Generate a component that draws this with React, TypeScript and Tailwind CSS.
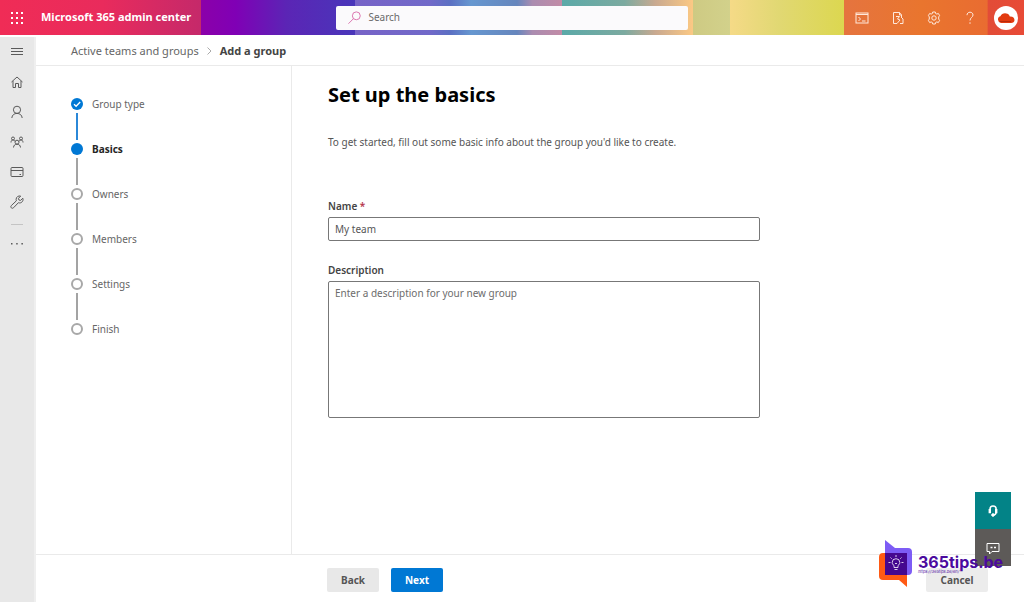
import React from "react";

type StepState = "done" | "current" | "todo";

const steps: { label: string; state: StepState }[] = [
	{ label: "Group type", state: "done" },
	{ label: "Basics", state: "current" },
	{ label: "Owners", state: "todo" },
	{ label: "Members", state: "todo" },
	{ label: "Settings", state: "todo" },
	{ label: "Finish", state: "todo" },
];

interface IconProps {
	className?: string;
	children: React.ReactNode;
}

const Icon = ({ className = "size-4", children }: IconProps) => (
	<svg
		viewBox="0 0 16 16"
		className={className}
		fill="none"
		stroke="currentColor"
		strokeWidth="1"
		aria-hidden="true"
	>
		{children}
	</svg>
);

const navItems = [
	{
		label: "Home",
		icon: (
			<path d="M2.5 8 8 3l5.500 5M4 7v6.500h2.500V9.500h3v4H12V7" />
		),
	},
	{
		label: "Users",
		icon: (
			<>
				<circle cx="8" cy="5.800" r="3.600" />
				<path d="M2.800 14c.3-3 2.400-4.600 5.200-4.600s4.900 1.600 5.200 4.600" />
			</>
		),
	},
	{
		label: "Teams and groups",
		icon: (
			<>
				<circle cx="4" cy="4.500" r="1.500" />
				<circle cx="12" cy="4.500" r="1.500" />
				<circle cx="8" cy="8.200" r="2" />
				<path d="M2 8.500c0-1.700.8-2.500 2-2.500s1.800.8 2.200 1.500M14 8.500c0-1.700-.8-2.500-2-2.500s-1.800.8-2.200 1.500M4.500 13.500c.2-2.300 1.500-3.300 3.500-3.300s3.300 1 3.500 3.300" />
			</>
		),
	},
	{
		label: "Billing",
		icon: (
			<>
				<rect x="2" y="3.500" width="12" height="9" rx="1" />
				<path d="M2 6.500h12M10.500 10.500H12" />
			</>
		),
	},
	{
		label: "Setup",
		icon: (
			<path d="m13.800 4.200-2.200 2.200-1.700-.4-.4-1.700 2.200-2.200c-2.200-.7-4.600.8-4.600 3.300 0 .5.100 1 .3 1.400l-5 4.700c-.8.800-.7 1.700-.1 2.300s1.500.7 2.300-.1l4.800-5c2.700 1.100 5.500-1.600 4.400-4.500Z" />
		),
	},
];

const headerActions = [
	{
		label: "Cloud shell",
		icon: (
			<>
				<rect x="2" y="3" width="12" height="10" />
				<path d="M2 4.500h12M4.500 7l2 2-2 2M8 11h3.500" />
			</>
		),
	},
	{
		label: "What's new",
		icon: (
			<>
				<path d="M7 13.500H3.500v-11h6L11.500 5v3M9.500 2.500V5h2" />
				<path d="M6 6.500h3.500L7.500 9l2.500 1-3 3.500M10 13.500h3V9l-1.500-1.500" />
			</>
		),
	},
	{
		label: "Settings",
		icon: (
			<>
				<path d="m6.700 2-.3 1.500-1.300.6-1.400-.7L2.400 5.600l.9 1.300v2.200l-.9 1.300 1.300 2.200 1.400-.7 1.300.6.3 1.500h2.600l.3-1.500 1.300-.6 1.400.7 1.300-2.200-.9-1.300V6.900l.9-1.300-1.300-2.200-1.400.7-1.300-.6L9.300 2Z" />
				<circle cx="8" cy="8" r="2.200" />
			</>
		),
	},
	{
		label: "Help",
		icon: (
			<>
				<path d="M5 5.200C5 3.300 6.300 2.200 8 2.200s3 1.100 3 2.800c0 2.200-3 2.700-3 5.500" />
				<path d="M8 12.300v1.500" />
			</>
		),
	},
];

const Header = () => (
	<header className="flex h-[35px] items-center bg-[linear-gradient(90deg,#f02c56_0%,#e92b5c_10%,#c5296a_19.6%,#8b00a9_19.6%,#8000b5_23%,#5b25b5_28%,#4936ba_34.7%,#7763c7_34.7%,#7169c9_42%,#5b70c3_44%,#6697d0_46%,#6686bd_50.500%,#ab8cb0_52%,#c28ba6_54.900%,#5ba9a8_54.900%,#7caaa0_61%,#c9a990_64%,#fcc984_67.700%,#ceca83_67.700%,#d2d18b_71.300%,#f5da87_71.300%,#e1d873_76%,#dcd750_82.400%,#e5743f_82.400%,#e9752e_90%,#e96c31_96.400%,#e24c37_96.500%,#e84a36_100%)] text-white">
		<div className="flex flex-1 items-center">
			<button
				type="button"
				aria-label="App launcher"
				className="flex w-[34px] justify-center"
			>
				<svg viewBox="0 0 12 12" className="size-3" fill="currentColor">
					{[0, 5, 10].map((y) =>
						[0, 5, 10].map((x) => (
							<rect
								key={`${x}-${y}`}
								x={x}
								y={y}
								width="2"
								height="2"
							/>
						))
					)}
				</svg>
			</button>
			<a href="#" className="ml-[7px] whitespace-nowrap text-[11px] font-bold">
				Microsoft 365 admin center
			</a>
		</div>
		<label className="flex h-6 w-[34.300%] items-center rounded-xs bg-[#fbfafc] px-3">
			<Icon className="size-[14px] text-[#d765a6]">
				<circle cx="9.500" cy="5.500" r="4.500" />
				<path d="M6.200 8.800.5 14.500" />
			</Icon>
			<input
				type="search"
				aria-label="Search"
				placeholder="Search"
				className="ml-[6px] min-w-0 flex-1 text-[10px] text-[#555] outline-none placeholder:text-[#6a6a6a]"
			/>
		</label>
		<div className="flex flex-1 items-center justify-end">
			{headerActions.map((action) => (
				<button
					key={action.label}
					type="button"
					aria-label={action.label}
					className="flex w-9 justify-center text-[#ffe9dc]"
				>
					<Icon>{action.icon}</Icon>
				</button>
			))}
			<button
				type="button"
				aria-label="Account"
				className="flex w-9 justify-center"
			>
				<span className="flex size-6 items-center justify-center rounded-full bg-white">
					<svg viewBox="0 0 18 12" className="h-3 w-[18px]">
						<path
							d="M4 11a3.500 3.500 0 0 1-.6-6.800C4.500 1.800 7.500.2 10.500 1.800c1.300.6 2 1.600 2.300 2.700C16 4.300 17.500 6 17.500 8S16 11 14 11Z"
							fill="#e23a10"
						/>
						<path
							d="M3 9.500h11"
							stroke="#b82a0c"
							strokeWidth="1"
						/>
					</svg>
				</span>
			</button>
		</div>
	</header>
);

const Sidebar = () => (
	<nav
		aria-label="Main"
		className="mt-[2px] flex w-9 shrink-0 flex-col items-center border-r-2 border-[#efefef] bg-[#e8e8e8] text-[#5a5a5a]"
	>
		<button type="button" aria-label="Toggle menu" className="flex h-[30px] items-center">
			<Icon>
				<path d="M2 4.500h12M2 7.500h12M2 10.500h12" />
			</Icon>
		</button>
		{navItems.map((item) => (
			<a
				key={item.label}
				href="#"
				aria-label={item.label}
				className="flex h-[30px] items-center"
			>
				<Icon>{item.icon}</Icon>
			</a>
		))}
		<hr className="mt-[7px] w-3 border-[#c4c4c4]" />
		<button type="button" aria-label="Show all" className="mt-[11px]">
			<svg viewBox="0 0 16 16" className="size-4" fill="currentColor">
				<rect x="2" y="7" width="1.500" height="1.500" />
				<rect x="7.200" y="7" width="1.500" height="1.500" />
				<rect x="12.400" y="7" width="1.500" height="1.500" />
			</svg>
		</button>
	</nav>
);

const StepMarker = ({ state }: { state: StepState }) => {
	if (state === "todo") {
		return (
			<span className="size-3 rounded-full border-2 border-[#a8a8a8]" />
		);
	}
	return (
		<span className="flex size-3 items-center justify-center rounded-full bg-[#0078d4] text-white">
			{state === "done" && (
				<svg
					viewBox="0 0 12 12"
					className="size-3"
					fill="none"
					stroke="currentColor"
					strokeWidth="1.3"
				>
					<path d="m3 6.200 2.100 2.100L9.200 4" />
				</svg>
			)}
		</span>
	);
};

const Steps = () => (
	<ol className="w-[256px] shrink-0 border-r border-[#eaeaea] pt-8 pl-[35px]">
		{steps.map((step, i) => (
			<li key={step.label} className="flex gap-[9px]">
				<div className="flex flex-col items-center">
					<StepMarker state={step.state} />
					{i < steps.length - 1 && (
						<span
							className={`my-[3px] h-[27px] w-[2px] ${
								step.state === "done"
									? "bg-[#2b88d8]"
									: "bg-[#a3a3a3]"
							}`}
						/>
					)}
				</div>
				<span
					className={`text-[10px] leading-3 ${
						step.state === "current"
							? "font-bold text-[#252525]"
							: "text-[#666]"
					}`}
				>
					{step.label}
				</span>
			</li>
		))}
	</ol>
);

const BasicsForm = () => (
	<form className="flex min-w-0 flex-1 flex-col px-9 pt-[15px] text-[10px] text-[#555]">
		<h1 className="text-[20px] leading-7 font-bold text-black">
			Set up the basics
		</h1>
		<p className="mt-[25px] leading-4">
			To get started, fill out some basic info about the group you'd like to
			create.
		</p>
		<div className="mt-12 flex max-w-[432px] flex-col gap-[3px]">
			<label htmlFor="name" className="leading-4 font-semibold text-[#444]">
				Name <span className="text-[#b5344a]">*</span>
			</label>
			<input
				id="name"
				type="text"
				required
				defaultValue="My team"
				className="h-6 rounded-xs border border-[#777] px-[6px]"
			/>
		</div>
		<div className="mt-[21px] flex max-w-[432px] flex-col gap-[3px]">
			<label
				htmlFor="description"
				className="leading-4 font-semibold text-[#444]"
			>
				Description
			</label>
			<textarea
				id="description"
				placeholder="Enter a description for your new group"
				className="h-[137px] resize-none rounded-xs border border-[#777] px-[6px] py-[3px] leading-4 placeholder:text-[#6c6c6c]"
			/>
		</div>
	</form>
);

const Footer = () => (
	<footer className="flex gap-3 border-t border-[#eaeaea] pt-[13px] pr-9 pb-[10px] pl-[291px] text-[10px] font-bold">
		<button
			type="button"
			className="h-6 w-[52px] rounded-xs bg-[#e8e8e8] text-[#555]"
		>
			Back
		</button>
		<button
			type="button"
			className="h-6 w-[52px] rounded-xs bg-[#0078d4] text-white"
		>
			Next
		</button>
		<button
			type="button"
			className="ml-auto h-6 w-[62px] rounded-xs bg-[#ececec] text-[#555]"
		>
			Cancel
		</button>
	</footer>
);

const SupportButtons = () => (
	<div className="absolute right-[13px] bottom-9 flex w-9 flex-col">
		<button
			type="button"
			aria-label="Help and support"
			className="flex h-[37px] items-center justify-center bg-[#038387] text-white"
		>
			<svg viewBox="0 0 16 16" className="size-4" fill="none" stroke="currentColor">
				<path
					d="M5 8.500V6.200C5 4 6.300 3 8 3s3.200 1.200 3.200 3.200v2.300c0 2.200-1.200 3.500-3 3.500"
					strokeWidth="1.500"
				/>
				<path d="M4.800 6v4.200M11.200 6v4.200" strokeWidth="2.400" />
				<circle cx="8" cy="12" r="1.300" fill="currentColor" />
			</svg>
		</button>
		<button
			type="button"
			aria-label="Give feedback"
			className="flex h-[37px] items-center justify-center bg-[#5d5a58] text-white"
		>
			<Icon>
				<path d="M2 3.500h12v8H7L4.500 14v-2.500H2Z" />
				<path d="M5.500 7.500h2M9 7.500h2" strokeWidth="1.500" />
			</Icon>
		</button>
	</div>
);

const SiteBadge = () => (
	<a
		href="#"
		className="absolute right-[19px] bottom-[14px] flex items-center gap-[5px] text-[#4b0a9e]"
	>
		<svg viewBox="0 0 34 48" className="h-12 w-[34px]">
			<path
				d="M4 13h24v34l-8-7H4a4 4 0 0 1-4-4V17a4 4 0 0 1 4-4Z"
				fill="#ff5a14"
			/>
			<path
				d="M6 0l10 8h13a4 4 0 0 1 4 4v19a4 4 0 0 1-4 4H6Z"
				fill="#7d5cf5"
			/>
			<path d="M6 13h22v22H6Z" fill="#45088f" />
			<g fill="none" stroke="#fff" strokeWidth=".8">
				<path d="M15 27.500v-2c-1.200-.8-1.800-1.900-1.800-3a3.800 3.800 0 0 1 7.600 0c0 1.100-.6 2.200-1.800 3v2ZM15.500 29.500h3M16 23l1 1 1-1" />
				<path d="M17 15v2M11.500 17.500l1.200 1.200M22.500 17.500l-1.200 1.200M9.500 22.500h2M22.500 22.500h2" />
			</g>
		</svg>
		<span className="flex w-[87px] flex-col font-['Inter',sans-serif]">
			<span className="text-[16px] leading-4 font-bold">365tips.be</span>
			<span className="text-[4px] leading-[4px] italic">
				https://365tips.be/en/
			</span>
		</span>
	</a>
);

const App = () => {
	return (
		<div className="relative flex min-h-screen flex-col bg-white font-['Noto_Sans','Open_Sans',sans-serif]">
			<Header />
			<div className="flex flex-1">
				<Sidebar />
				<main className="flex min-w-0 flex-1 flex-col">
					<nav
						aria-label="Breadcrumb"
						className="flex h-[31px] items-center gap-2 border-b border-[#eaeaea] pt-[2px] pl-[35px] text-[11px] text-[#666]"
					>
						<a href="#">Active teams and groups</a>
						<svg
							viewBox="0 0 5 8"
							className="h-2 w-[5px]"
							fill="none"
							stroke="#aaa"
						>
							<path d="m.5.5 3.500 3.500-3.500 3.500" />
						</svg>
						<span className="font-bold text-[#444]">
							Add a group
						</span>
					</nav>
					<div className="flex flex-1">
						<Steps />
						<BasicsForm />
					</div>
					<Footer />
				</main>
			</div>
			<SupportButtons />
			<SiteBadge />
		</div>
	);
};

export default App;
